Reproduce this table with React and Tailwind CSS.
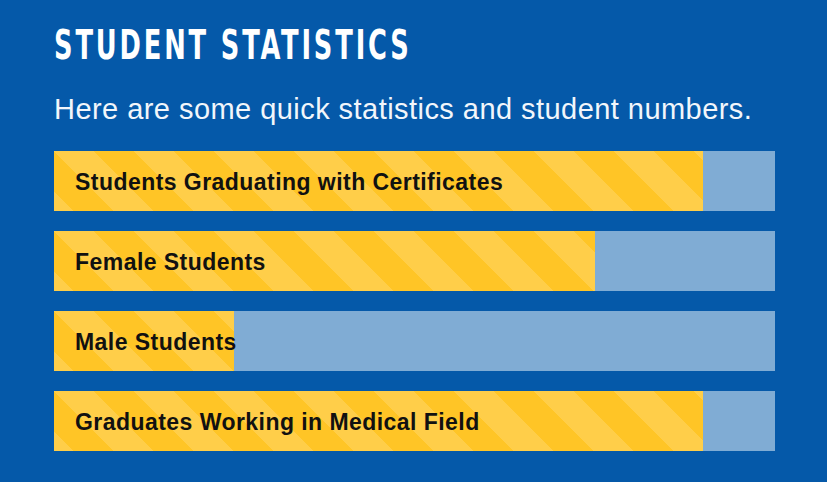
const stats = [
  { label: "Students Graduating with Certificates", value: 90 },
  { label: "Female Students", value: 75 },
  { label: "Male Students", value: 25 },
  { label: "Graduates Working in Medical Field", value: 90 },
];

const stripes = {
  backgroundImage:
    "linear-gradient(45deg, rgba(255,255,255,.16) 25%, transparent 25%, transparent 50%, rgba(255,255,255,.16) 50%, rgba(255,255,255,.16) 75%, transparent 75%, transparent)",
  backgroundSize: "80px 80px",
};

export default function App() {
  return (
    <div className="w-[827px] h-[482px] overflow-hidden bg-[#0559a9] pl-[54px] pt-[25px] font-['Liberation_Sans',Arial,sans-serif]">
      <h1 className="inline-block origin-left scale-x-[0.715] whitespace-nowrap text-[40px] leading-none font-bold uppercase tracking-[4px] text-white font-['DejaVu_Sans_Condensed','Liberation_Sans',sans-serif]">
        Student Statistics
      </h1>
      <p className="mt-[29px] text-[29px] leading-none tracking-[0.45px] text-[#f2f6fb]">
        Here are some quick statistics and student numbers.
      </p>
      <div className="mt-[27px] w-[721px] flex flex-col gap-[20px]">
        {stats.map((s) => (
          <div key={s.label} className="grid h-[60px] bg-[#80acd4]">
            <div
              className="col-start-1 row-start-1 h-full bg-[#ffc526]"
              style={{ ...stripes, width: `${s.value}%` }}
            />
            <span className="col-start-1 row-start-1 self-center whitespace-nowrap pl-[21px] pt-[2px] text-[23px] font-bold tracking-[0.45px] text-[#111]">
              {s.label}
            </span>
          </div>
        ))}
      </div>
    </div>
  );
}
